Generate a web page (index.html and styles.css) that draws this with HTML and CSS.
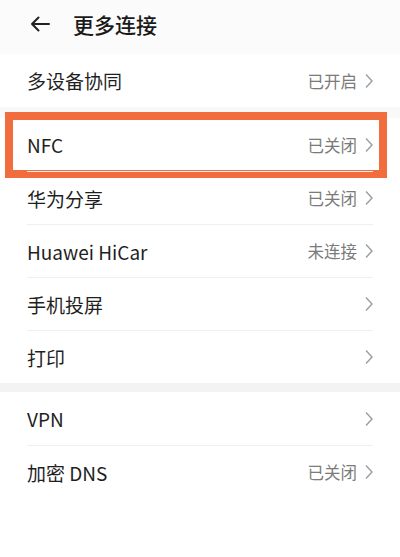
FILE: index.html
```html
<!DOCTYPE html>
<html lang="zh-CN">
<head>
  <meta charset="UTF-8">
  <meta name="viewport" content="width=device-width, initial-scale=1.0">
  <title>更多连接</title>
  <link rel="stylesheet" href="styles.css">
</head>
<body>
  <div class="header">
    <svg class="back" width="20" height="16" viewBox="0 0 20 16">
      <path d="M19 8H2M8.5 1.5L2 8l6.5 6.5" fill="none" stroke="#222" stroke-width="2" stroke-linecap="round" stroke-linejoin="round"/>
    </svg>
    <h1>更多连接</h1>
  </div>

  <div class="section">
    <div class="row">
      <span class="label">多设备协同</span>
      <span class="value">已开启<svg class="chev" width="8" height="16" viewBox="0 0 8 16"><path d="M1 1.5L7 8l-6 6.5" /></svg></span>
    </div>
  </div>

  <div class="section gap-small">
    <div class="row highlight">
      <span class="label">NFC</span>
      <span class="value">已关闭<svg class="chev" width="8" height="16" viewBox="0 0 8 16"><path d="M1 1.5L7 8l-6 6.5" /></svg></span>
    </div>
    <div class="row">
      <span class="label">华为分享</span>
      <span class="value">已关闭<svg class="chev" width="8" height="16" viewBox="0 0 8 16"><path d="M1 1.5L7 8l-6 6.5" /></svg></span>
    </div>
    <div class="row">
      <span class="label">Huawei HiCar</span>
      <span class="value">未连接<svg class="chev" width="8" height="16" viewBox="0 0 8 16"><path d="M1 1.5L7 8l-6 6.5" /></svg></span>
    </div>
    <div class="row">
      <span class="label">手机投屏</span>
      <span class="value"><svg class="chev" width="8" height="16" viewBox="0 0 8 16"><path d="M1 1.5L7 8l-6 6.5" /></svg></span>
    </div>
    <div class="row">
      <span class="label">打印</span>
      <span class="value"><svg class="chev" width="8" height="16" viewBox="0 0 8 16"><path d="M1 1.5L7 8l-6 6.5" /></svg></span>
    </div>
  </div>

  <div class="section gap-band">
    <div class="row">
      <span class="label">VPN</span>
      <span class="value"><svg class="chev" width="8" height="16" viewBox="0 0 8 16"><path d="M1 1.5L7 8l-6 6.5" /></svg></span>
    </div>
    <div class="row">
      <span class="label">加密 DNS</span>
      <span class="value">已关闭<svg class="chev" width="8" height="16" viewBox="0 0 8 16"><path d="M1 1.5L7 8l-6 6.5" /></svg></span>
    </div>
  </div>
</body>
</html>
```

FILE: styles.css
```css
body {
  margin: 0;
  background: #fff;
  font-family: "Noto Sans CJK SC", "Noto Sans", sans-serif;
  color: #1f1f1f;
}
.header {
  height: 54px;
  padding: 0 0 6px 30px;
  box-sizing: border-box;
  display: flex;
  align-items: center;
  background: #fbfbfb;
}
.back {
  display: block;
  margin-right: 23px;
}
.header h1 {
  margin: 0;
  font-size: 21px;
  font-weight: 500;
  color: #1a1a1a;
}
.section {
  background: #fff;
}
.gap-small {
  border-top: 11px solid #f9f9f9;
}
.gap-band {
  border-top: 9px solid #f3f3f3;
}
.row {
  position: relative;
  box-sizing: border-box;
  height: 53px;
  margin: 0 27px;
  display: flex;
  align-items: center;
  justify-content: space-between;
}
.row + .row {
  border-top: 1px solid #efefef;
}
.label {
  font-size: 19px;
}
.value {
  display: flex;
  align-items: center;
  font-size: 16.5px;
  color: #7b7b7b;
}
.chev {
  display: block;
  margin-left: 8px;
  fill: none;
  stroke: #a0a0a0;
  stroke-width: 1.5;
}
.highlight::after {
  content: "";
  position: absolute;
  left: -22px;
  right: -14px;
  top: -6px;
  bottom: -7px;
  border: 8px solid #f26d3d;
}
```
